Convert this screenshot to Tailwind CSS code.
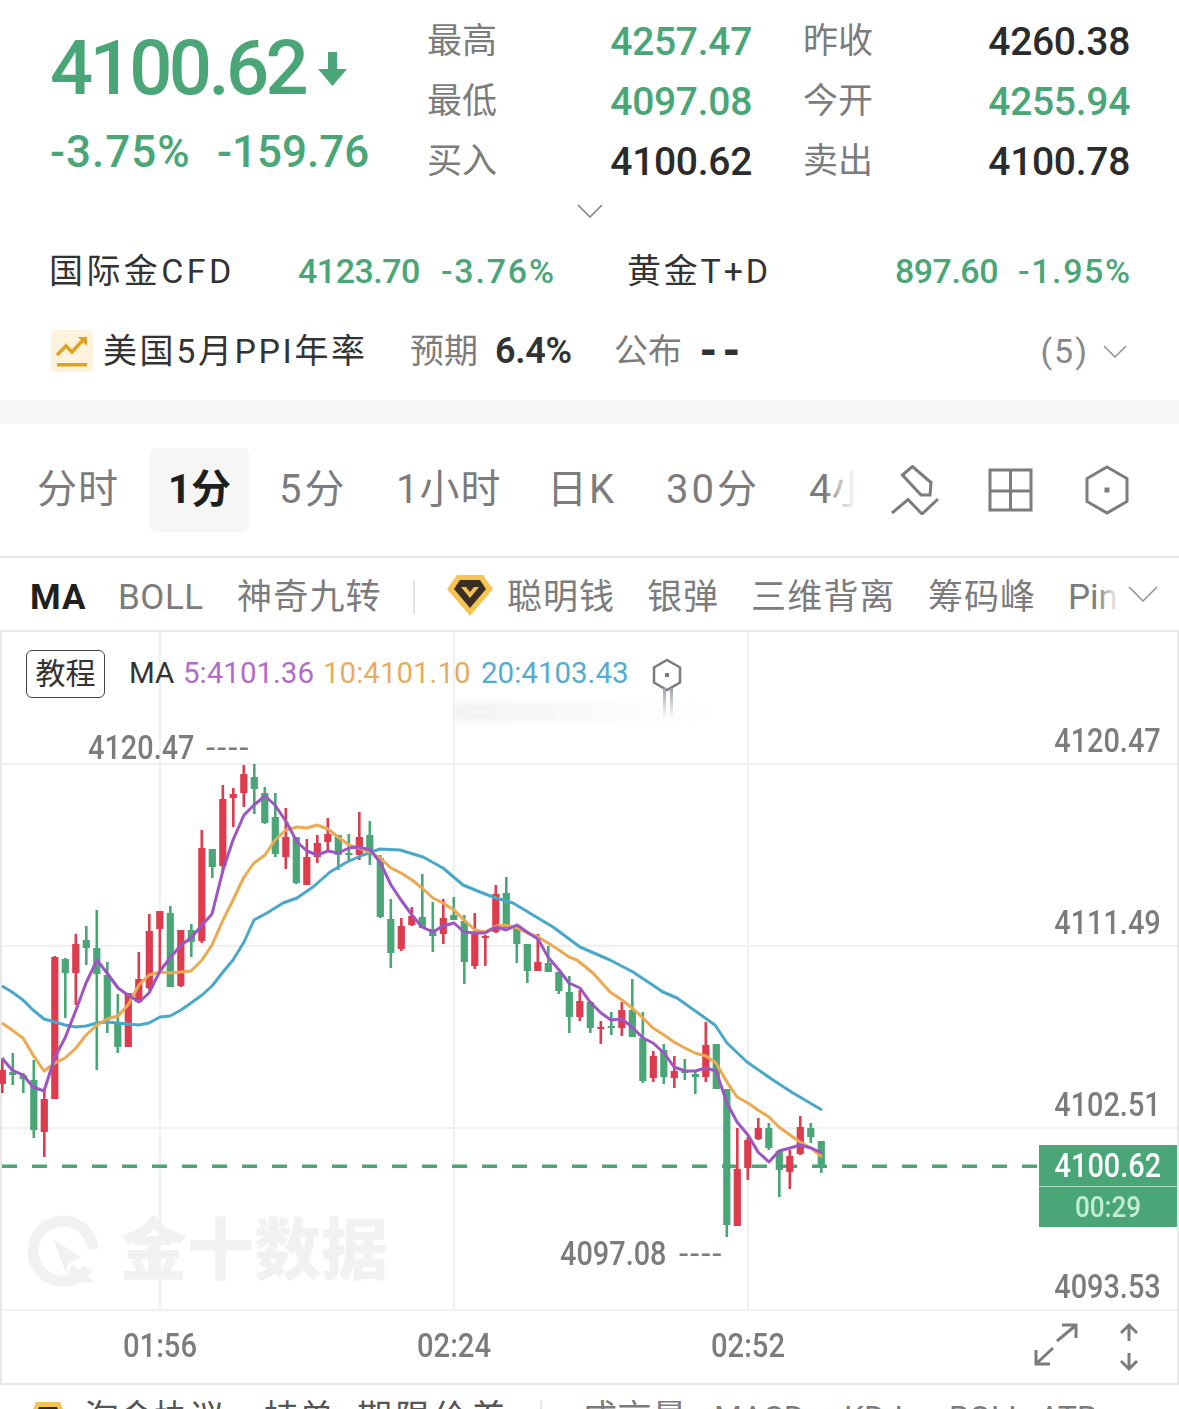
<!DOCTYPE html>
<html lang="zh-CN">
<head>
  <meta charset="UTF-8" />
  <meta name="viewport" content="width=device-width, initial-scale=1.0" />
  <title>XAUUSD</title>
  <script src="https://cdn.jsdelivr.net/npm/@tailwindcss/browser@4"></script>
</head>
<body class="bg-white w-[1179px] h-[1409px] overflow-hidden font-['Roboto','Noto_Sans_CJK_SC',sans-serif] text-[#7c7c7c]">

  <!-- Quote header -->
  <section class="h-[400px] relative">
    <div class="flex h-[190px] pt-[10px]">
      <div class="w-[427px] pl-[50px]">
        <div class="flex items-center h-[116px] text-[#4aa676]">
          <span class="font-medium text-[76px] tracking-[-3.600px] leading-none">4100.62</span>
          <svg class="ml-[12px] mt-[2px]" width="32" height="38" viewBox="0 0 32 38"><path d="M11 2h9v17h10L15.500 36 1 19h10z" fill="#4aa676"/></svg>
        </div>
        <div class="flex mt-[4px] font-medium text-[44px] leading-none text-[#4aa676]">
          <span class="w-[167px] tracking-[1px]">-3.75%</span><span>-159.76</span>
        </div>
      </div>
      <div class="grid grid-cols-[70px_255px_121px_257px] grid-rows-[60px_60px_60px] items-center pt-[1px] text-[35px] leading-none">
        <span>最高</span><span class="pt-[2px] text-right text-[#4aa676] font-medium text-[39px] tracking-[-0.3px]">4257.47</span>
        <span class="pl-[51px]">昨收</span><span class="pt-[2px] text-right text-[#2b2b2b] font-medium text-[39px] tracking-[-0.3px]">4260.38</span>
        <span>最低</span><span class="pt-[2px] text-right text-[#4aa676] font-medium text-[39px] tracking-[-0.3px]">4097.08</span>
        <span class="pl-[51px]">今开</span><span class="pt-[2px] text-right text-[#4aa676] font-medium text-[39px] tracking-[-0.3px]">4255.94</span>
        <span>买入</span><span class="pt-[2px] text-right text-[#2b2b2b] font-medium text-[39px] tracking-[-0.3px]">4100.62</span>
        <span class="pl-[51px]">卖出</span><span class="pt-[2px] text-right text-[#2b2b2b] font-medium text-[39px] tracking-[-0.3px]">4100.78</span>
      </div>
    </div>
    <div class="flex justify-center h-[40px] pt-[14px]">
      <svg width="26" height="14" viewBox="0 0 26 14"><path d="M1 1l12 12L25 1" fill="none" stroke="#808080" stroke-width="1.500"/></svg>
    </div>
    <div class="flex items-center h-[82px] pl-[49px] pr-[49px] text-[34px] leading-none text-[#333]">
      <span class="w-[249px] tracking-[3.400px]">国际金CFD</span>
      <span class="w-[143px] font-medium tracking-[-0.5px] text-[#4aa676]">4123.70</span>
      <span class="w-[186px] font-medium tracking-[1.800px] text-[#4aa676]">-3.76%</span>
      <span class="tracking-[2.800px]">黄金T+D</span>
      <span class="ml-auto font-medium tracking-[-0.5px] text-[#4aa676]">897.60</span>
      <span class="ml-[20px] w-[112px] font-medium tracking-[1.600px] text-[#4aa676]">-1.95%</span>
    </div>
    <div class="flex items-center h-[78px] pl-[51px] pr-[52px] text-[34px] leading-none">
      <svg class="mr-[10px]" width="42" height="42" viewBox="0 0 42 42">
        <rect width="42" height="42" rx="3" fill="#fdf3dc"/>
        <path d="M6 25l9-9 6 6L33 9" fill="none" stroke="#e0a21e" stroke-width="3.500"/>
        <path d="M27 7h9v9z" fill="#e0a21e"/>
        <rect x="6" y="33" width="30" height="3.500" fill="#e0a21e"/>
      </svg>
      <span class="w-[307px] text-[#333] tracking-[2.600px]">美国5月PPI年率</span>
      <span class="w-[85px]">预期</span>
      <span class="w-[119px] font-semibold text-[36px] tracking-[-0.3px] text-[#333]">6.4%</span>
      <span class="w-[85px]">公布</span>
      <span class="font-black text-[42px] text-[#333] tracking-[4px]">--</span>
      <span class="ml-auto text-[34px] tracking-[2px] text-[#888]">(5)</span>
      <svg class="ml-[14px]" width="24" height="13" viewBox="0 0 24 13"><path d="M1 1l11 11L23 1" fill="none" stroke="#909090" stroke-width="1.500"/></svg>
    </div>
  </section>

  <div class="h-[24px] bg-[#f6f6f6]"></div>

  <!-- Period tabs -->
  <nav class="relative flex items-center h-[134px] pl-[37px] text-[40px] leading-none border-b-2 border-[#e8e8e8]">
    <span class="w-[113px] tracking-[1px]">分时</span>
    <span class="flex items-center justify-center w-[99px] h-[84px] rounded-[6px] bg-[#f6f6f6] font-bold text-[#1f1f1f]">1分</span>
    <span class="ml-[30px] w-[117px] tracking-[3px]">5分</span>
    <span class="w-[151px] tracking-[1px]">1小时</span>
    <span class="w-[119px] tracking-[2px]">日K</span>
    <span class="w-[143px] tracking-[3px]">30分</span>
    <span>4小</span>
    <span class="absolute left-[826px] top-0 h-full w-[50px] bg-gradient-to-r from-white/10 to-white to-60%"></span>
    <span class="absolute left-[862px] top-0 h-full w-[317px] bg-white"></span>
    <svg class="absolute left-[891px] top-[41px]" width="48" height="50" viewBox="0 0 48 50" fill="none" stroke="#7c7c7c" stroke-width="3">
      <path d="M11.500 10L21.400 1.500 40 17.500 39 30 30 30z"/>
      <path d="M1 48L17 34.500 31 49 47 34"/>
    </svg>
    <svg class="absolute left-[988px] top-[44px]" width="45" height="44" viewBox="0 0 45 44" fill="none" stroke="#7c7c7c" stroke-width="3">
      <path d="M2 2h41v40H2zM22.500 2v40M2 23h41"/>
    </svg>
    <svg class="absolute left-[1085px] top-[41px]" width="44" height="50" viewBox="0 0 44 50" fill="none" stroke="#7c7c7c" stroke-width="3">
      <path d="M22 2l20 11.500v23L22 48 2 36.500v-23z"/>
      <rect x="19.500" y="22.500" width="5" height="5" fill="#7c7c7c" stroke="none"/>
    </svg>
  </nav>

  <!-- Indicator row -->
  <div class="relative flex items-center h-[72px] pl-[30px] pt-[6px] text-[35px] leading-none">
    <span class="w-[88px] font-bold tracking-[1px] text-[#1f1f1f]">MA</span>
    <span class="w-[119px] tracking-[0.5px]">BOLL</span>
    <span class="w-[176px] tracking-[1.200px]">神奇九转</span>
    <span class="w-[2px] h-[34px] bg-[#e4e4e4]"></span>
    <svg class="ml-[32px] mr-[14px] -mt-[4px]" width="46" height="42" viewBox="0 0 46 42">
      <path d="M10 1h26l10 14-23 27L0 15z" fill="#f6c453"/>
      <path d="M13 6h20l6 9-16 19L7 15z" fill="#3a2f22"/>
      <path d="M14 13h18l-9 11z" fill="#f2c14e"/>
      <path d="M19 13h8l-4 5z" fill="#3a2f22"/>
    </svg>
    <span class="w-[140px] tracking-[1px]">聪明钱</span>
    <span class="w-[104px] tracking-[1px]">银弹</span>
    <span class="w-[177px] tracking-[1.200px]">三维背离</span>
    <span class="w-[140px] tracking-[1px]">筹码峰</span>
    <span>Pin</span>
    <span class="absolute left-[1096px] top-0 h-full w-[24px] bg-gradient-to-r from-white/0 to-white"></span>
    <svg class="absolute left-[1128px] top-[28px]" width="30" height="17" viewBox="0 0 30 17"><path d="M1 1l14 14L29 1" fill="none" stroke="#909090" stroke-width="1.500"/></svg>
  </div>

  <!-- Chart panel -->
  <section class="relative h-[755px] border-y-2 border-[#e8e8e8]">
    <svg id="chart" class="absolute left-0 top-[-2px]" width="1179" height="755" viewBox="0 630 1179 755"></svg>

    <div class="absolute left-[26px] top-[18px] flex items-center justify-center w-[79px] h-[48px] rounded-[6px] border border-[#444] text-[30px] leading-none text-[#333]">教程</div>
    <div class="absolute left-[129px] top-[23px] flex text-[29.500px] leading-[36px] whitespace-pre">
      <span class="w-[54px] text-[#333]">MA</span><span class="w-[140px] text-[#b06cc9]">5:4101.36</span><span class="w-[158px] text-[#e8ac62]">10:4101.10</span><span class="text-[#56acd0]">20:4103.43</span>
    </div>
    <svg class="absolute left-[652px] top-[26px]" width="30" height="34" viewBox="0 0 30 34" fill="none" stroke="#7c7c7c" stroke-width="2.500">
      <path d="M15 2l13 7.500v15L15 32 2 24.500v-15z"/>
      <rect x="13" y="15" width="4" height="4" fill="#7c7c7c" stroke="none"/>
    </svg>
    <!-- smear under the legend -->
    <div class="absolute left-[452px] top-[70px] w-[270px] h-[20px] rounded-l-full bg-gradient-to-r from-gray-200/50 via-gray-100/50 to-white/0 blur-[3px]"></div>
    <div class="absolute left-[663px] top-[56px] w-[3px] h-[30px] bg-gradient-to-b from-gray-400 to-white/0"></div>
    <div class="absolute left-[670px] top-[56px] w-[3px] h-[30px] bg-gradient-to-b from-gray-400 to-white/0"></div>

    <!-- watermark -->
    <div class="absolute left-[120px] top-[578px] font-['Noto_Sans_CJK_SC',sans-serif] font-black text-[67px] leading-[70px] text-[#f1f1f1] whitespace-nowrap">金十数据</div>

    <!-- extreme labels -->
    <div class="absolute left-[88px] top-[98px] origin-left scale-x-[0.875] font-medium text-[33px] leading-[36px]">4120.47</div>
    <div class="absolute left-[206px] top-[98px] text-[33px] leading-[36px] tracking-[2px]">----</div>
    <div class="absolute left-[560px] top-[604px] origin-left scale-x-[0.875] font-medium text-[33px] leading-[36px]">4097.08</div>
    <div class="absolute left-[679px] top-[604px] text-[33px] leading-[36px] tracking-[2px]">----</div>

    <!-- price axis -->
    <div class="absolute right-[18px] top-[91px] origin-right scale-x-[0.875] font-medium text-[33px] leading-[36px]">4120.47</div>
    <div class="absolute right-[18px] top-[273px] origin-right scale-x-[0.875] font-medium text-[33px] leading-[36px]">4111.49</div>
    <div class="absolute right-[18px] top-[455px] origin-right scale-x-[0.875] font-medium text-[33px] leading-[36px]">4102.51</div>
    <div class="absolute right-[18px] top-[637px] origin-right scale-x-[0.875] font-medium text-[33px] leading-[36px]">4093.53</div>

    <!-- last price tag -->
    <div class="absolute left-[1039px] top-[513px] w-[138px] h-[82px] flex flex-col bg-[#4aa676] font-medium leading-none">
      <span class="flex items-center justify-center h-[42px] border-b border-[#a8dcc0] text-[33px] text-white"><span class="scale-x-[0.875]">4100.62</span></span>
      <span class="flex items-center justify-center flex-1 text-[30px] text-[#c4ecd4]"><span class="scale-x-[0.87]">00:29</span></span>
    </div>

    <!-- time axis -->
    <div class="absolute left-[100px] top-[696px] w-[120px] text-center scale-x-[0.885] font-medium text-[33px] leading-[36px]">01:56</div>
    <div class="absolute left-[394px] top-[696px] w-[120px] text-center scale-x-[0.885] font-medium text-[33px] leading-[36px]">02:24</div>
    <div class="absolute left-[688px] top-[696px] w-[120px] text-center scale-x-[0.885] font-medium text-[33px] leading-[36px]">02:52</div>

    <svg class="absolute left-[1032px] top-[690px]" width="48" height="46" viewBox="0 0 48 46" fill="none" stroke="#7c7c7c" stroke-width="3">
      <path d="M25 19L43 4M30 3h14v13M21 26L5 41M4 28v14h14"/>
    </svg>
    <svg class="absolute left-[1118px] top-[690px]" width="22" height="50" viewBox="0 0 22 50" fill="none" stroke="#7c7c7c" stroke-width="3">
      <path d="M11 3v16M3 11l8-8 8 8M11 31v16M3 39l8 8 8-8"/>
    </svg>
  </section>

  <!-- Cut-off bottom row -->
  <div class="relative flex items-start h-[30px] pl-[28px] pt-[16px] text-[35px] leading-none whitespace-pre">
    <svg class="mr-[16px]" width="40" height="20" viewBox="0 0 40 20">
      <path d="M8 1h24l8 19H0z" fill="#f6c453"/>
      <path d="M11 6h18l6 14H5z" fill="#33291c"/>
    </svg>
    <span class="w-[180px] text-[#555]">淘金协议</span>
    <span class="w-[93px] text-[#555]">持单</span>
    <span class="w-[183px] text-[#555] tracking-[3px]">期限价差</span>
    <span class="w-[2px] h-[30px] bg-[#e4e4e4]"></span>
    <span class="ml-[40px] w-[132px]">成交量</span>
    <span class="w-[130px] text-[32px]">MACD</span>
    <span class="w-[105px] text-[32px]">KDJ</span>
    <span class="w-[90px] text-[32px]">BOLL</span>
    <span class="text-[32px]">ATR</span>
  </div>

  <script>
    // candles: colour, wick top, body top, body bottom, wick bottom
    const candles = [
      "r1060,1070,1084,1093","g1053,1072,1075,1085","g1073,1075,1079,1093","g1060,1080,1130,1138","r1090,1099,1132,1157",
      "r956,957,1099,1099","g958,959,973,1018","r934,944,973,1005","g926,940,948,965","g910,948,974,1070",
      "g962,975,1020,1033","g994,1022,1047,1053","r993,993,1047,1047","r952,979,1002,1003","r914,931,988,990",
      "r911,911,929,973","g906,913,987,987","r930,930,986,987","g924,930,942,957","r830,848,941,943",
      "g849,849,867,878","r785,799,866,873","r788,794,798,827","r765,774,793,807","g764,777,789,814",
      "g787,793,823,824","g793,817,854,857","r808,837,857,869","g837,837,883,884","r839,857,885,885",
      "r835,843,857,863","r818,834,842,850","g835,835,855,870","g834,853,855,860","r812,837,855,860",
      "g821,835,855,865","g855,858,917,918","g899,919,953,968","r918,926,949,951","r907,916,925,926",
      "g874,917,928,928","g902,929,936,952","r899,918,934,944","g897,915,920,920","g915,921,962,984",
      "r913,933,966,969","r935,936,937,966","r885,894,932,933","g877,893,928,928","g925,925,944,963",
      "g944,944,971,983","r934,962,971,971","g946,963,972,972","g972,972,991,994","g976,992,1017,1033",
      "r990,1001,1017,1021","g1001,1002,1028,1033","r1021,1027,1028,1044","g1012,1026,1028,1035","r1002,1010,1028,1036",
      "g979,1010,1037,1037","g1012,1038,1081,1083","r1051,1056,1078,1082","g1044,1050,1077,1084","r1056,1071,1078,1088",
      "g1059,1071,1073,1080","g1072,1074,1077,1094","r1022,1045,1077,1082","g1044,1044,1089,1089","g1089,1089,1225,1237",
      "r1128,1169,1226,1226","r1137,1140,1168,1180","r1118,1128,1139,1140","g1123,1128,1148,1150","g1150,1151,1170,1197",
      "r1150,1156,1172,1189","r1116,1127,1154,1155","g1123,1128,1137,1143","g1141,1141,1168,1173"
    ];
    const ma5 = "2,1058 12,1070 23,1075 33,1087 44,1091 55,1057 65,1038 76,1010 86,983 97,960 107,973 118,988 128,995 139,1002 149,993 160,971 170,958 181,945 191,938 202,925 212,914 223,870 233,840 244,815 254,805 265,796 275,805 287,823 297,842 307,851 317,855 328,851 338,853 349,848 359,847 370,850 380,862 391,885 401,900 412,915 422,927 433,932 443,926 454,923 464,932 475,933 485,933 496,927 506,930 517,925 527,932 538,939 548,957 559,970 569,983 580,988 590,1002 601,1013 611,1020 622,1019 632,1027 643,1038 653,1043 664,1053 674,1067 685,1071 695,1071 706,1068 716,1071 727,1103 737,1122 748,1135 758,1152 769,1162 779,1151 790,1148 800,1145 811,1148 822,1153";
    const ma10 = "2,1023 12,1030 23,1038 33,1055 44,1071 55,1063 65,1058 76,1048 86,1035 97,1025 107,1019 118,1016 128,1005 139,985 149,975 160,972 170,973 181,972 191,971 202,960 212,945 223,920 233,900 244,877 254,863 265,855 275,840 286,830 297,827 307,828 317,825 328,829 338,837 349,845 359,848 370,852 380,858 391,868 401,873 412,880 422,888 433,898 443,903 454,910 464,920 475,930 485,932 496,926 506,925 517,928 527,933 538,937 548,943 559,950 569,957 577,960 593,973 610,992 622,1000 632,1008 643,1018 653,1028 664,1035 674,1042 685,1048 695,1053 706,1056 716,1063 727,1082 737,1097 748,1103 758,1110 769,1117 779,1127 790,1135 800,1142 811,1148 822,1157";
    const ma20 = "2,986 12,992 23,1000 33,1010 44,1019 55,1022 65,1025 76,1027 86,1026 97,1023 107,1022 118,1023 128,1024 139,1025 149,1023 160,1017 170,1016 181,1010 191,1003 202,995 212,986 223,972 233,960 244,942 254,920 267,913 283,903 297,898 313,887 330,872 347,862 363,855 380,849 400,850 423,857 443,868 463,885 480,892 493,897 513,903 533,915 553,927 580,947 610,960 633,972 663,992 677,998 715,1025 727,1043 747,1062 773,1080 793,1093 822,1110";

    let svg = "";
    // grid
    [764, 946, 1128, 1310].forEach(y => { svg += `<rect x="0" y="${y - 1}" width="1179" height="2" fill="#f0f0f0"/>`; });
    [160, 454, 748].forEach(x => { svg += `<rect x="${x - 1}" y="630" width="2" height="680" fill="#f0f0f0"/>`; });
    // panel sides
    svg += `<rect x="0" y="630" width="2" height="755" fill="#e8e8e8"/><rect x="1177" y="630" width="2" height="755" fill="#e8e8e8"/>`;
    // watermark mark
    svg += `<path d="M88 1268A30 30 0 1 1 93 1249" fill="none" stroke="#f1f1f1" stroke-width="11"/>`;
    svg += `<path d="M53 1239l28 18-12 5-3 11zM72 1264l24 19-20-2-8-8z" fill="#f1f1f1"/>`;
    // last price dashes
    for (let x = 2; x < 1040; x += 30) {
      svg += `<rect x="${x}" y="1164.500" width="${Math.min(15, 1040 - x)}" height="3.500" fill="#4aa676"/>`;
    }
    candles.forEach((c, i) => {
      const fill = c[0] === "r" ? "#dc3c4e" : "#4aa676";
      const [wt, bt, bb, wb] = c.slice(1).split(",").map(Number);
      const x = 2.3 + 10.5 * i;
      svg += `<rect x="${x - 1.3}" y="${wt}" width="2.6" height="${wb - wt}" fill="${fill}"/>`;
      svg += `<rect x="${x - 3.6}" y="${bt}" width="7.2" height="${Math.max(bb - bt, 2)}" fill="${fill}"/>`;
    });
    [[ma20, "#49a8c9"], [ma10, "#eca94f"], [ma5, "#9c55c2"]].forEach(([pts, color]) => {
      svg += `<polyline points="${pts}" fill="none" stroke="${color}" stroke-width="3" stroke-linejoin="round"/>`;
    });
    document.getElementById("chart").innerHTML = svg;
  </script>
</body>
</html>
